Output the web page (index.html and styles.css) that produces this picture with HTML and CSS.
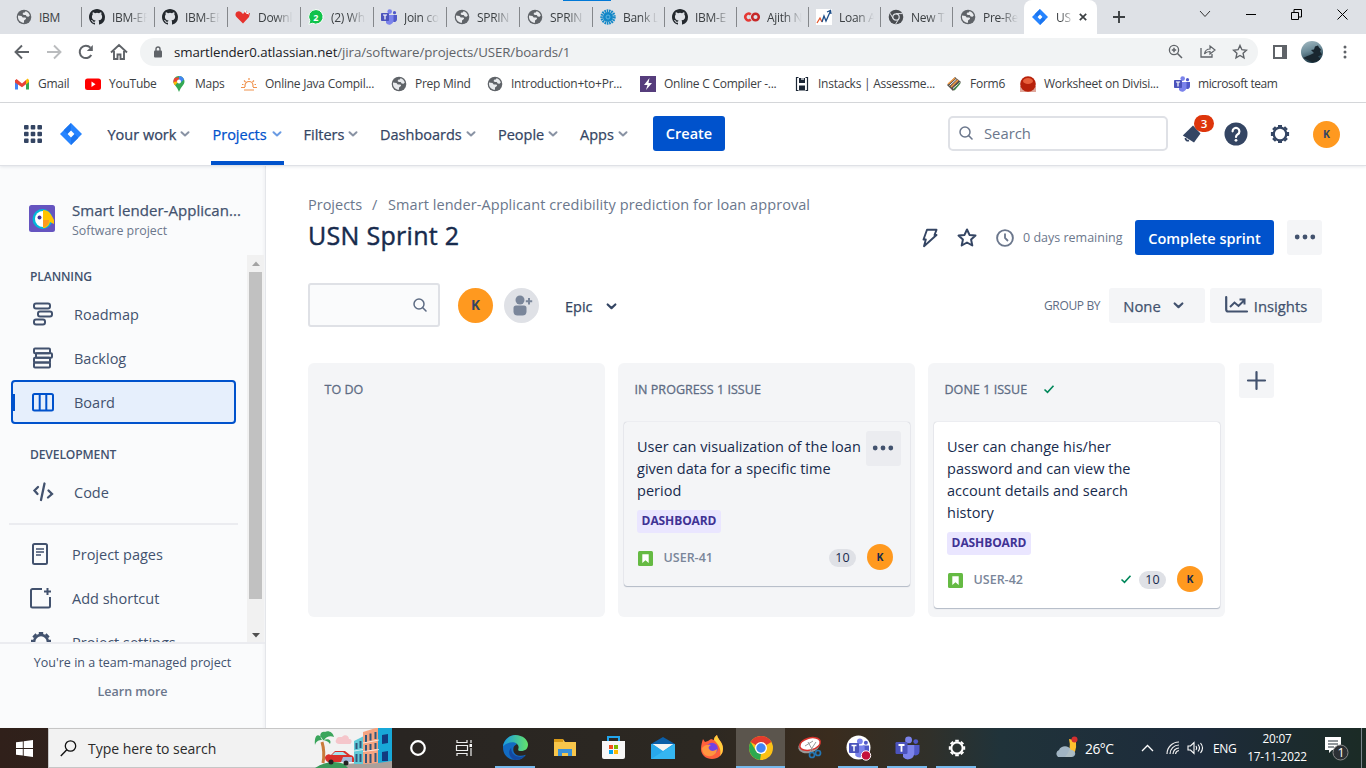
FILE: index.html
```html
<!DOCTYPE html>
<html lang="en">
<head>
<meta charset="utf-8">
<title>USN Sprint 2 - Agile board - Jira</title>
<link rel="stylesheet" href="styles.css">
</head>
<body>
<svg class="defs" width="0" height="0">
  <symbol id="globe" viewBox="0 0 16 16"><circle cx="8" cy="8" r="7.300" fill="#5f6368"/><path d="M2 6.500 5.500 7l1.200 1.500h2.600c1 .3 1 1.600 0 2L8 11.500v2.300c-3.300 0-6-2.700-6-5.800z" fill="#e8eaed"/><path d="M9.500 2.300c2 .5 3.700 2 4.300 4.200l-1.300 1.300-1.800-.3-1-1.500H7.800L6.500 5l1-1.500h1.300z" fill="#e8eaed"/></symbol>
  <symbol id="github" viewBox="0 0 16 16"><path fill="#24292e" d="M8 0C3.580 0 0 3.580 0 8c0 3.540 2.290 6.530 5.470 7.590.4.070.55-.17.55-.38 0-.19-.010-.82-.010-1.490-2.010.37-2.530-.49-2.690-.94-.090-.23-.48-.94-.82-1.130-.28-.15-.68-.52-.010-.53.63-.010 1.080.58 1.230.82.72 1.210 1.870.87 2.330.66.070-.52.28-.87.51-1.070-1.780-.2-3.640-.89-3.640-3.950 0-.87.31-1.590.82-2.150-.080-.2-.36-1.020.080-2.120 0 0 .67-.21 2.200.82a7.500 7.500 0 0 1 4 0c1.530-1.040 2.200-.82 2.200-.82.44 1.100.16 1.920.080 2.120.51.56.82 1.270.82 2.150 0 3.070-1.870 3.750-3.650 3.950.29.25.54.73.54 1.480 0 1.070-.010 1.930-.010 2.200 0 .21.15.46.55.38A8 8 0 0 0 16 8c0-4.420-3.580-8-8-8z"/></symbol>
  <symbol id="teams" viewBox="0 0 16 16"><circle cx="8.700" cy="2.600" r="2.300" fill="#7b83eb"/><circle cx="13.500" cy="3.700" r="1.600" fill="#5059c9"/><path d="M11 6h5v4.500a2.500 2.500 0 0 1-4 2z" fill="#5059c9"/><path d="M5 6h7.500v5.500a4.200 4.200 0 0 1-7.500 2.500z" fill="#7b83eb"/><rect y="4" width="8" height="8" rx=".8" fill="#4b53bc"/><path d="M2 6h4M4 6v4.500" stroke="#fff" stroke-width="1.200" fill="none"/></symbol>
  <symbol id="jira" viewBox="0 0 24 24"><path d="M12 0 24 12 12 24 0 12z" fill="#2684ff"/><path d="M12 0v8.300L8.300 12 4 7.800z" fill="#1a75f0"/><path d="M12 24v-8.300l3.700-3.700 4.300 4.200z" fill="#1a75f0"/><path d="m12 8.300 3.700 3.700-3.700 3.700L8.300 12z" fill="#fff"/></symbol>
  <symbol id="chev" viewBox="0 0 10 10"><path d="m1.500 3.200 3.500 3.300 3.500-3.300" fill="none" stroke="currentColor" stroke-width="2" stroke-linecap="round" stroke-linejoin="round"/></symbol>
  <symbol id="mag" viewBox="0 0 16 16"><circle cx="7" cy="7" r="5" fill="none" stroke="currentColor" stroke-width="1.500"/><path d="m10.800 10.800 3.200 3.200" stroke="currentColor" stroke-width="1.600" stroke-linecap="round"/></symbol>
  <symbol id="dots" viewBox="0 0 22 6"><g fill="#42526e"><circle cx="3.200" cy="3" r="2.400"/><circle cx="11" cy="3" r="2.400"/><circle cx="18.800" cy="3" r="2.400"/></g></symbol>
  <symbol id="gear" viewBox="0 0 22 22"><circle cx="11" cy="11" r="6.900" fill="none" stroke="currentColor" stroke-width="2.500"/><path d="M11 1v2.500M11 18.500V21M1 11h2.500M18.500 11H21M3.900 3.900l1.700 1.700M16.400 16.400l1.700 1.700M3.900 18.100l1.700-1.700M16.400 5.600l1.700-1.700" stroke="currentColor" stroke-width="4.400"/></symbol>
  <symbol id="story" viewBox="0 0 15 15"><rect width="15" height="15" rx="1.500" fill="#65ba43"/><path d="M4.300 3.300h6.400v8.600L7.500 9.300l-3.200 2.600z" fill="#fff"/></symbol>
  <symbol id="check" viewBox="0 0 12 10"><path d="m1.500 5.500 3 2.800 6-6.600" fill="none" stroke="#00875a" stroke-width="1.600"/></symbol>
</svg>

<div class="tabstrip">
  <div class="tab"><svg class="fav"><use href="#globe"/></svg><span>IBM</span></div>
  <div class="tab"><svg class="fav"><use href="#github"/></svg><span>IBM-EP</span></div>
  <div class="tab"><svg class="fav"><use href="#github"/></svg><span>IBM-EP</span></div>
  <div class="tab"><svg class="fav" viewBox="0 0 16 16"><path d="M8 14.500 1.500 8C-1.500 4 3 .500 6 3l2 2 3-3.500 1 3 3-.5-1 4z" fill="#e5322d"/><path d="m10 1 1 3 3 1" stroke="#fff" fill="none"/></svg><span>Downl</span></div>
  <div class="tab"><svg class="fav" viewBox="0 0 16 16"><path d="M8 .500a7.300 7.300 0 1 1-3.500 13.800L.800 15.300l1-3.600A7.300 7.300 0 0 1 8 .500z" fill="#11c24b" stroke="#fff"/><text x="5.200" y="11.500" class="wa">2</text></svg><span>(2) Wh</span></div>
  <div class="tab"><svg class="fav"><use href="#teams"/></svg><span>Join co</span></div>
  <div class="tab"><svg class="fav"><use href="#globe"/></svg><span>SPRIN</span></div>
  <div class="tab"><svg class="fav"><use href="#globe"/></svg><span>SPRIN</span></div>
  <div class="tab n"><svg class="fav" viewBox="0 0 16 16"><circle cx="8" cy="8" r="5" fill="#1287c7"/><circle cx="8" cy="8" r="6.300" fill="none" stroke="#1287c7" stroke-width="2.800" stroke-dasharray="1.600 .7"/><circle cx="8" cy="8" r="2" fill="none" stroke="#5db4e2"/></svg><span>Bank L</span></div>
  <div class="tab n"><svg class="fav"><use href="#github"/></svg><span>IBM-E</span></div>
  <div class="tab n"><svg class="fav" viewBox="0 0 16 16"><path d="M6.800 5.500A3.300 3.300 0 1 0 6.800 10.500" stroke="#e53935" stroke-width="2.500" fill="none"/><circle cx="11.500" cy="8" r="3.300" stroke="#c62828" stroke-width="2.500" fill="none"/></svg><span>Ajith N</span></div>
  <div class="tab n"><svg class="fav" viewBox="0 0 16 16"><path fill="#fff" d="M0 0h16v16H0z"/><path d="m1 14 3-5 2 4" stroke="#e4572e" fill="none" stroke-width="1.300"/><path d="m6 13 2-6 2 5 4.500-10M11 3l3.500-1.500.5 3.500" stroke="#1d4e89" fill="none" stroke-width="1.300"/></svg><span>Loan A</span></div>
  <div class="tab n"><svg class="fav" viewBox="0 0 16 16"><circle cx="8" cy="8" r="7.300" fill="#4a4d51"/><circle cx="8" cy="8" r="3.200" fill="#4a4d51" stroke="#dee1e6" stroke-width="1.200"/><path d="M8 4.600h6.500M5.200 9.700 2 4.200M10.900 9.700 7.700 15" stroke="#dee1e6"/></svg><span>New T</span></div>
  <div class="tab last"><svg class="fav"><use href="#globe"/></svg><span>Pre-Re</span></div>
  <div class="tab active"><svg class="fav"><use href="#jira"/></svg><span>US</span><svg class="close" viewBox="0 0 8 8"><path d="m.8.8 6.400 6.400M7.200.8.8 7.200" stroke="#3c4043" stroke-width="1.700"/></svg></div>
  <svg class="newtab" viewBox="0 0 12 12"><path d="M6 0v12M0 6h12" stroke="#3c4043" stroke-width="1.900"/></svg>
  <div class="winctl">
    <svg width="12" height="8"><path d="m1 1 5 5.500L11 1" fill="none" stroke="#333"/></svg>
    <svg width="11" height="8"><path d="M0 4.500h10" stroke="#000"/></svg>
    <svg width="11" height="11"><path d="M.5 3.500h7v7h-7zM3 3V.5h7.500V8H8" fill="none" stroke="#000"/></svg>
    <svg width="11" height="11"><path d="m.5.5 10 10M10.500.5l-10 10" stroke="#000"/></svg>
  </div>
  <i class="mark"></i>
</div>

<div class="toolbar">
  <div class="navbtns">
    <svg width="16" height="16" viewBox="0 0 16 16"><path d="M15 8H2M8 1.500 1.500 8 8 14.500" fill="none" stroke="#5f6368" stroke-width="1.900"/></svg>
    <svg width="16" height="16" viewBox="0 0 16 16"><path d="M1 8h13M8 1.500 14.500 8 8 14.500" fill="none" stroke="#babcbe" stroke-width="1.900"/></svg>
    <svg width="16" height="16" viewBox="0 0 16 16"><path d="M13.300 11A6.200 6.200 0 1 1 12.400 3.600" fill="none" stroke="#5f6368" stroke-width="2"/><path d="M14.800 1v6H8.800z" fill="#5f6368"/></svg>
    <svg width="18" height="16" viewBox="0 0 18 16"><path d="M1 8.500 9 1l8 7.500M4 7v8h3.500v-4.500h3V15H14V7" fill="none" stroke="#5f6368" stroke-width="1.900"/></svg>
  </div>
  <div class="url">
    <svg width="8" height="12" viewBox="0 0 8 12"><path d="M2 5V3a2 2 0 0 1 4 0v2" fill="none" stroke="#5f6368" stroke-width="1.400"/><rect y="4.500" width="8" height="7" rx="1" fill="#5f6368"/></svg>
    <p><b>smartlender0.atlassian.net</b>/jira/software/projects/USER/boards/1</p>
    <div class="urlicons">
      <svg width="15" height="15" viewBox="0 0 15 15"><circle cx="6" cy="6" r="4.600" fill="none" stroke="#5f6368" stroke-width="1.300"/><path d="M9.500 9.500 14 14M3.800 6h4.400M6 3.800v4.400" stroke="#5f6368" stroke-width="1.500"/></svg>
      <svg width="16" height="14" viewBox="0 0 16 14"><path d="M1 4v9h11v-3" fill="none" stroke="#5f6368" stroke-width="1.300"/><path d="M4.500 10c.5-3.500 2-5 5.500-5V2l5 4-5 4V7.500C7.500 7.500 6 8 4.500 10z" fill="none" stroke="#5f6368" stroke-width="1.200"/></svg>
      <svg width="16" height="15" viewBox="0 0 16 15"><path d="m8 1.500 1.900 4.200 4.500.5-3.300 3.100.9 4.500L8 11.500l-4 2.300.9-4.500L1.600 6.200l4.500-.5z" fill="none" stroke="#5f6368" stroke-width="1.400"/></svg>
    </div>
  </div>
  <svg class="panel" viewBox="0 0 14 14"><path d="M1 1h12v12H1z" fill="none" stroke="#5f6368" stroke-width="2"/><path d="M9 1h4v12H9z" fill="#5f6368"/></svg>
  <svg class="profile" viewBox="0 0 22 22"><defs><clipPath id="pc"><circle cx="11" cy="11" r="11"/></clipPath><linearGradient id="pg" x2=".3" y2="1"><stop stop-color="#a5bcc4"/><stop offset=".5" stop-color="#6d8c99"/><stop offset="1" stop-color="#1c3746"/></linearGradient></defs><g clip-path="url(#pc)"><path d="M0 0h22v22H0z" fill="url(#pg)"/><path d="M2 17q4-2 7-3l4-2-3-3 3-.500 1-3 3-1 1 2 2 2-1 2 2 3-4 2 3 3-8 3z" fill="#19262f"/></g></svg>
  <svg class="kebab" viewBox="0 0 4 14"><g fill="#5f6368"><circle cx="2" cy="2" r="1.500"/><circle cx="2" cy="7" r="1.500"/><circle cx="2" cy="12" r="1.500"/></g></svg>
</div>

<div class="bookmarks">
  <a class="w1"><svg viewBox="0 0 16 16"><path d="M1 13.500V4h3v9.500z" fill="#4285f4"/><path d="M12 13.500V4h3v9.500z" fill="#34a853"/><path d="M1 4.500 2.500 3 8 7.500 12 4v4.200l-4 3L1 6.500z" fill="#ea4335"/><path d="m12 4 1.500-1.500L15 4v2l-3 2.500z" fill="#fbbc04"/></svg>Gmail</a>
  <a class="w2"><svg viewBox="0 0 16 16"><rect y="2.500" width="16" height="11.500" rx="2.500" fill="red"/><path d="m6.500 5.500 4 2.700-4 2.700z" fill="#fff"/></svg>YouTube</a>
  <a class="w3"><svg viewBox="0 0 16 16"><path d="M8 0a5.500 5.500 0 0 0-4 9.200c2 2.300 3 4.300 4 6.800 1-2.500 2-4.500 4-6.800A5.500 5.500 0 0 0 8 0z" fill="#34a853"/><path d="M3.800 1.800A5.500 5.500 0 0 0 4 9l5-7.800z" fill="#ea4335"/><path d="M2.500 6a5.500 5.500 0 0 0 1.500 3.200L8 5z" fill="#fbbc04"/><path d="M8 0a5.500 5.500 0 0 1 5 3.500L8 8z" fill="#4285f4"/><circle cx="8" cy="5.500" r="2" fill="#fff"/></svg>Maps</a>
  <a class="w4"><svg viewBox="0 0 16 16"><path d="M4 11V9.500a4 4 0 0 1 8 0V11M0 11.500h4M12 11.500h4M3 14h10M8 2v2M3 4.500l1.500 1.500M13 4.500 11.500 6M1 8.500h1.500M13.500 8.500H15" fill="none" stroke="#f0924c" stroke-width="1.200"/></svg>Online Java Compil...</a>
  <a class="w5"><svg><use href="#globe"/></svg>Prep Mind</a>
  <a class="w6"><svg><use href="#globe"/></svg>Introduction+to+Pr...</a>
  <a class="w7"><svg viewBox="0 0 16 16"><path fill="#563d7c" d="M0 0h16v16H0z"/><path d="M9.500 2 4 9h3.500L6 14l6-7H8.500z" fill="#fff"/></svg>Online C Compiler -...</a>
  <a class="w8"><svg viewBox="0 0 16 16"><path d="M4.500 1.500H2.500v13h2M11.500 1.500h2v13h-2" stroke="#1b2635" fill="none" stroke-width="1.200"/><path d="M5 2h6v5H5zM5 9.500h6v5H5z" fill="#1b2635"/><path d="M7 2h3v2H7z" fill="#fff" opacity=".6"/></svg>Instacks | Assessme...</a>
  <a class="w9"><svg viewBox="0 0 16 16"><path d="m1 9 8-8 6 5-8 9z" fill="#56514b"/><path d="m2 8 7-6M5 11l7-7" stroke="#f49b42" stroke-width="1.500"/><path d="m3.500 9.500 7-6.500M7 12.500l7-6" stroke="#fff" stroke-width="1"/><path d="m8 14 6-7" stroke="#438b48" stroke-width="1.500"/></svg>Form6</a>
  <a class="w10"><svg viewBox="0 0 16 16"><path d="M0 10h16v6H0z" fill="#dfa79b"/><circle cx="8" cy="8" r="7.800" fill="#b7210a"/><ellipse cx="8" cy="5" rx="5" ry="3" fill="#e8603c"/></svg>Worksheet on Divisi...</a>
  <a class="w11"><svg><use href="#teams"/></svg>microsoft team</a>
</div>

<header class="nav">
  <svg class="apps" viewBox="0 0 18 18"><g fill="#344563"><rect width="4.600" height="4.600" rx="1"/><rect x="6.700" width="4.600" height="4.600" rx="1"/><rect x="13.400" width="4.600" height="4.600" rx="1"/><rect y="6.700" width="4.600" height="4.600" rx="1"/><rect x="6.700" y="6.700" width="4.600" height="4.600" rx="1"/><rect x="13.400" y="6.700" width="4.600" height="4.600" rx="1"/><rect y="13.400" width="4.600" height="4.600" rx="1"/><rect x="6.700" y="13.400" width="4.600" height="4.600" rx="1"/><rect x="13.400" y="13.400" width="4.600" height="4.600" rx="1"/></g></svg>
  <svg class="logo"><use href="#jira"/></svg>
  <nav class="menu">
    <a>Your work<svg><use href="#chev"/></svg></a>
    <a class="on">Projects<svg><use href="#chev"/></svg></a>
    <a>Filters<svg><use href="#chev"/></svg></a>
    <a>Dashboards<svg><use href="#chev"/></svg></a>
    <a>People<svg><use href="#chev"/></svg></a>
    <a>Apps<svg><use href="#chev"/></svg></a>
  </nav>
  <button class="primary create">Create</button>
  <div class="search"><svg width="16" height="16"><use href="#mag"/></svg>Search</div>
  <div class="bell"><svg width="20" height="20" viewBox="0 0 20 20"><path d="M.8 11.500 11 1.500l7.500 8L12 18.500z" fill="#344563"/><path d="M3.500 14c0 2 1.500 3 3.500 2.300" stroke="#344563" stroke-width="1.800" fill="none"/></svg><em>3</em></div>
  <svg class="help" viewBox="0 0 24 24"><circle cx="12" cy="12" r="11.500" fill="#344563"/><path d="M8.600 9.300a3.400 3.400 0 1 1 5.200 2.900c-1.200.8-1.800 1.200-1.800 2.800" fill="none" stroke="#fff" stroke-width="2.200" stroke-linecap="round"/><circle cx="12" cy="18.300" r="1.400" fill="#fff"/></svg>
  <svg class="cog"><use href="#gear"/></svg>
  <span class="avatar md">K</span>
</header>

<div class="page">
  <aside>
    <div class="project">
      <svg width="26" height="27" viewBox="0 0 26 27"><rect width="26" height="27" rx="2.500" fill="#6554c0"/><circle cx="13.500" cy="14" r="10" fill="#00b8d9"/><path d="M14 6a8 8 0 0 0 0 16z" fill="#fff"/><path d="M14 5c6 0 8 4 11 10v4l-4-2c-1 4-4 6-7 6z" fill="#ffc400"/><path d="M14 15h6c0 4-2 7-6 7z" fill="#ff991f"/><circle cx="10.500" cy="12.500" r="2" fill="#403294"/></svg>
      <div><h2>Smart lender-Applican...</h2><p>Software project</p></div>
    </div>
    <div class="scroller">
      <div class="items">
        <h3>PLANNING</h3>
        <a><svg viewBox="0 0 22 24"><g fill="none" stroke="#42526e" stroke-width="2"><rect x="2" y="1.500" width="16" height="5" rx="2"/><rect x="6" y="9.500" width="14" height="5" rx="2"/><rect x="2" y="17.500" width="11" height="5" rx="2"/></g></svg>Roadmap</a>
        <a><svg viewBox="0 0 22 24"><g fill="none" stroke="#42526e" stroke-width="2"><rect x="2" y="2.500" width="16" height="4.700" rx="1"/><rect x="4" y="7.200" width="16" height="4.600" rx="1"/><rect x="2" y="11.800" width="16" height="4.700" rx="1"/><rect x="2" y="16.500" width="16" height="5" rx="1"/></g></svg>Backlog</a>
        <a class="sel"><svg viewBox="0 0 22 24"><g fill="none" stroke="#0052cc" stroke-width="2"><rect x="1" y="4" width="20" height="16.500" rx="1.500"/><path d="M7.700 4v16.500M14.300 4v16.500"/></g></svg>Board</a>
        <h3 class="dev">DEVELOPMENT</h3>
        <a class="code"><svg viewBox="0 0 22 24"><path d="M6 7 2.500 10.500 5.500 14M16.500 10.500l3.500 3.500-4 3.500M12.500 3.500 9 20" fill="none" stroke="#42526e" stroke-width="2.300" stroke-linecap="round"/></svg>Code</a>
        <hr>
        <a class="low"><svg viewBox="0 0 22 24"><rect x="3" y="2" width="14" height="20" rx="1.500" fill="none" stroke="#42526e" stroke-width="2"/><path d="M6 7h8M6 10h8M6 13h5" stroke="#42526e" stroke-width="1.700"/></svg>Project pages</a>
        <a class="low"><svg viewBox="0 0 22 24"><path d="M12 3H2.500A1.500 1.500 0 0 0 1 4.500v15.500A1.500 1.500 0 0 0 2.500 21.500h16a1.500 1.500 0 0 0 1.500-1.500V11" fill="none" stroke="#42526e" stroke-width="2"/><path d="M17.500 2v7M14 5.500h7" stroke="#42526e" stroke-width="2"/></svg>Add shortcut</a>
        <a class="low"><svg class="g"><use href="#gear"/></svg>Project settings</a>
      </div>
      <div class="bar"><svg width="8" height="5"><path d="M0 5 4 .5 8 5z" fill="#a3a3a3"/></svg><i></i><svg width="8" height="5"><path d="M0 0 4 4.500 8 0z" fill="#505050"/></svg></div>
    </div>
    <div class="foot"><p>You're in a team-managed project</p><b>Learn more</b></div>
  </aside>

  <main>
    <div class="crumbs"><span class="c1">Projects</span><span class="c2">/</span><span class="c3">Smart lender-Applicant credibility prediction for loan approval</span></div>
    <div class="titlerow">
      <h1>USN Sprint 2</h1>
      <svg class="bolt" viewBox="0 0 16 20"><path d="M5 1.800h9.500L12.500 7h2L2 18.200 3.800 11.500H1.500z" fill="none" stroke="#344563" stroke-width="1.900" stroke-linejoin="round"/></svg>
      <svg class="star" viewBox="0 0 20 19"><path d="m10 1.500 2.500 5.400 6 .7-4.400 4 1.200 5.900-5.300-3-5.300 3 1.200-5.900-4.400-4 6-.7z" fill="none" stroke="#344563" stroke-width="2" stroke-linejoin="round"/></svg>
      <svg class="clock" viewBox="0 0 18 18"><circle cx="9" cy="9" r="7.900" fill="none" stroke="#6b778c" stroke-width="1.900"/><path d="M9 4.500V9l3 3" fill="none" stroke="#6b778c" stroke-width="1.800"/></svg>
      <span class="remain">0 days remaining</span>
      <button class="primary complete">Complete sprint</button>
      <button class="grey more"><svg width="22" height="6"><use href="#dots"/></svg></button>
    </div>
    <div class="filters">
      <div class="find"><svg width="16" height="16"><use href="#mag"/></svg></div>
      <span class="avatar lg">K</span>
      <svg class="adduser" viewBox="0 0 35 35"><circle cx="17.500" cy="17.500" r="17.500" fill="#dfe1e6"/><g fill="#7a869a"><circle cx="16" cy="12" r="4.500"/><path d="M9.500 20a2.500 2.500 0 0 1 2.500-2.500h8a2.500 2.500 0 0 1 2.500 2.500v4a4 4 0 0 1-4 3.500h-5a4 4 0 0 1-4-3.500z"/></g><path d="M25 10v6.500M21.800 13.200h6.400" stroke="#7a869a" stroke-width="2"/></svg>
      <span class="epic">Epic<svg><use href="#chev"/></svg></span>
      <span class="group">GROUP BY</span>
      <button class="grey none">None<svg><use href="#chev"/></svg></button>
      <button class="grey insights"><svg viewBox="0 0 23 17"><path d="M1.200 1v12.500a2 2 0 0 0 2 2H22" fill="none" stroke="#42526e" stroke-width="2.200" stroke-linecap="round"/><path d="m5 11 4.500-4.500 4 3.500L19 4.500M14.500 3.500h5v5" fill="none" stroke="#42526e" stroke-width="2"/></svg>Insights</button>
    </div>
    <div class="board">
      <section><h4>TO DO</h4></section>
      <section><h4>IN PROGRESS 1 ISSUE</h4>
        <article class="hover">
          <p>User can visualization of the loan<br>given data for a specific time<br>period</p>
          <span class="tag">DASHBOARD</span>
          <div class="meta"><svg class="st"><use href="#story"/></svg><b>USER-41</b><span class="pts">10</span><span class="avatar sm">K</span></div>
          <button class="cardmore"><svg width="22" height="6"><use href="#dots"/></svg></button>
        </article>
      </section>
      <section><h4>DONE 1 ISSUE<svg class="ck"><use href="#check"/></svg></h4>
        <article>
          <p>User can change his/her<br>password and can view the<br>account details and search<br>history</p>
          <span class="tag">DASHBOARD</span>
          <div class="meta"><svg class="st"><use href="#story"/></svg><b>USER-42</b><svg class="ck2"><use href="#check"/></svg><span class="pts">10</span><span class="avatar sm">K</span></div>
        </article>
      </section>
      <button class="grey add"><svg width="19" height="19" viewBox="0 0 19 19"><path d="M9.500 1v17M1 9.500h17" stroke="#42526e" stroke-width="2.200" stroke-linecap="round"/></svg></button>
    </div>
  </main>
</div>

<footer class="taskbar">
  <div class="start"><svg width="17" height="17" viewBox="0 0 17 17"><path d="m0 2.300 6.800-.9v6.700H0zM7.700 1.200 17 0v8.100H7.700zM0 9h6.800v6.600L0 14.700zM7.700 9H17v8l-9.300-1.200z" fill="#fff"/></svg></div>
  <div class="wsearch">
    <svg width="17" height="17" viewBox="0 0 17 17"><circle cx="10.500" cy="6" r="5.200" fill="none" stroke="#111" stroke-width="1.300"/><path d="M6.800 9.800.8 16" stroke="#111" stroke-width="1.400"/></svg>
    <span>Type here to search</span>
    <svg class="art" viewBox="0 0 78 40"><path d="M1 40q16-10 32-3l3 3z" fill="#3a9a5a"/><path d="m30 36 48-3v7H34z" fill="#a9a09b"/><path d="M8 14q3 10 1 21" stroke="#c97b3c" stroke-width="3" fill="none"/><path d="M9 12C3 2 0 10 1 17c1-4 4-5 7-5-4-6 0-9 3-8 3-2 8 0 9 5-4-2-8 0-10 3 4-2 8 0 6 4-2-3-5-4-8-4z" fill="#3aa55b"/><path d="M22 12c1-4 4-3 6-3 2-3 7-2 7 2 3-1 4 5 0 5H25c-3 0-4-3-3-4z" fill="#f5c6cb"/><path d="m40 13 10-5v28H40z" fill="#62cbd8"/><path d="m49 4 16-5v36l-16 1z" fill="#f5a481"/><path d="m64 0 14-3v36l-14 2z" fill="#18a8d8"/><path d="M42.500 15v6M46.500 13v7M52 7v7M56.500 5.500v7M61.500 4v7M52 17v6M56.500 16v6M61.500 15v6M42.500 26v8M46.500 26v8M52 26v9M56.500 26v9M61.500 25v9" stroke="#31577c" stroke-width="2"/><path d="m49 23.500 16-2M49 15l16-3M40 23l9-1.500" stroke="#fff" stroke-width="1" opacity=".7"/><path d="m68 7 6-1v9l-6 1zM68 24l6-1v10h-6z" fill="#123b80"/><path d="M11 29q2-4 6-2l4-4h10l5 4q5 0 4 7H14q-3-1-3-5z" fill="#d9302b"/><path d="m18 27 3-3h8l4 3z" fill="#a7e3ee"/><path d="M29 29h9v5H27z" fill="#a5b8d9"/><circle cx="17" cy="34" r="2.500" fill="#222"/><circle cx="32" cy="35" r="2.500" fill="#222"/></svg>
  </div>
  <div class="cell"><svg width="16" height="16"><circle cx="8" cy="8" r="6.800" fill="none" stroke="#fff" stroke-width="2.200"/></svg></div>
  <div class="cell tv"><svg width="17" height="16"><path d="M1 0v2.500h10V0M1 16v-2.500h10V16M.5 5.500h11v5H.5zM15 0v3M15 8v8" fill="none" stroke="#eee" stroke-width="1.200"/><path d="M13.500 4H16v3h-2.500z" fill="#fff"/></svg></div>
  <div class="cell run"><svg width="25" height="25" viewBox="0 0 24 24"><defs><linearGradient id="e1" x2="1"><stop stop-color="#199ae0"/><stop offset="1" stop-color="#64e36b"/></linearGradient></defs><path d="M12 0C5 0 0 6 0 12c0 7 5 12 12 12 4 0 7-1 10-5-7 3-13-1-12-6 0-2 1-3 3-4z" fill="#126bc2"/><path d="M0 11C1 4 7 0 12 0c7 0 12 5 12 9 0 5-4 7-9 6-1-1 0-2 0-3 0-3-3-5-6-5-4 0-7 2-9 4z" fill="url(#e1)"/><path d="M8 12c-1 7 6 11 13 8-3 4-8 4-10 4-5-2-7-8-3-12z" fill="#1448a0"/></svg></div>
  <div class="cell"><svg width="22" height="19"><path d="M0 1h9l2 3h11v14H0z" fill="#f7c64b"/><path d="M0 1h9v3H0z" fill="#d99a17"/><path d="M4 18v-7h14v7h-4v-3H8v3z" fill="#3a91d8"/></svg></div>
  <div class="cell"><svg width="23" height="24"><path d="M6 6V1h11v5" stroke="#22a6ed" stroke-width="2" fill="none"/><path d="M0 5h23v16q0 2-2 2H2q-2 0-2-2z" fill="#f7f7f7"/><path d="M7 9h4v4H7z" fill="#f25022"/><path d="M12 9h4v4h-4z" fill="#7fba00"/><path d="M7 14h4v4H7z" fill="#00a4ef"/><path d="M12 14h4v4h-4z" fill="#ffb900"/></svg></div>
  <div class="cell"><svg width="24" height="22"><path d="M0 7 12 0l12 7v3H0z" fill="#0a5ea8"/><path d="M0 7h24v15H0z" fill="#28a8ea"/><path d="M2 7h20l-10 7z" fill="#f4f4f4"/><path d="M24 7 0 22h24z" fill="#35b6f1"/><path d="M2 7h20l-10 6.500z" fill="#f4f4f4"/></svg></div>
  <div class="cell"><svg width="24" height="25" viewBox="0 0 24 25"><path d="M3 4 5 7l3-1 3-2 3 1c0-3 2-4 3-5 1 5 6 7 6 14 0 6-5 10-11 10S1 20 1 14c0-4 1-7 2-10z" fill="#ff5f3c"/><path d="M14 5c0-3 2-4 3-5 1 5 6 7 6 14q0 4-3 7c2-7-2-12-6-16z" fill="#ffcf3d"/><circle cx="12" cy="13.500" r="5.800" fill="#7542e5"/><path d="M2 13c2-3 6-4 9-3-2 1-3 2-2 4 2 3 6 2 8 0 0 5-5 8-9 7-4 0-6-4-6-8z" fill="#ff9640"/></svg></div>
  <div class="cell cur"><svg width="24" height="24" viewBox="0 0 24 24"><circle cx="12" cy="12" r="12" fill="#fbc116"/><path d="M12 12 1.600 6A12 12 0 0 1 22.400 6z" fill="#e33b2e"/><path d="M1.600 6 7 15l5 3-1 5.900A12 12 0 0 1 1.600 6z" fill="#2da94f"/><circle cx="12" cy="12" r="6" fill="#fff"/><circle cx="12" cy="12" r="4.700" fill="#4285f4"/></svg></div>
  <div class="cell"><svg width="24" height="24"><ellipse cx="11" cy="10" rx="11" ry="7" fill="#999" transform="rotate(-15 11 10)"/><ellipse cx="12" cy="8" rx="10.500" ry="6" fill="#fff" stroke="#d8322c" stroke-width="1.500" transform="rotate(-15 12 8)"/><path d="m7 10 8-5M10 6l5 9M18 6l-6 9" stroke="#999"/><circle cx="14" cy="19" r="2.500" fill="none" stroke="#2577b5" stroke-width="1.700"/><circle cx="20" cy="17" r="2.500" fill="none" stroke="#2577b5" stroke-width="1.700"/></svg></div>
  <div class="cell run"><svg width="25" height="26" viewBox="0 0 25 26"><circle cx="12.500" cy="12.500" r="12" fill="#fff"/><svg x="3" y="3" width="20" height="20"><use href="#teams"/></svg><circle cx="20" cy="20.500" r="4.700" fill="#c4123c" stroke="#fff"/></svg></div>
  <div class="cell run"><svg width="25" height="24"><use href="#teams"/></svg></div>
  <div class="cell run white"><svg width="18" height="18"><use href="#gear"/></svg></div>
  <div class="tray">
    <svg class="moon" width="24" height="24"><path d="M14 3q4 0 7 3 1 10-5 15h-6q7-7 4-18z" fill="#ffbf2e"/><circle cx="19.500" cy="3.500" r="3" fill="#d32f2f"/><path d="M3 21a4 4 0 0 1 1-7c2-5 10-5 12 0 5 0 6 6 1 7z" fill="#a9bdcb" opacity=".95"/></svg>
    <span class="temp">26°C</span>
    <svg class="up" width="13" height="8"><path d="m1 7 5.500-5.500L12 7" fill="none" stroke="#fff" stroke-width="1.300"/></svg>
    <svg class="wifi" width="14" height="14"><g fill="none" stroke="#eee" stroke-width="1.200"><path d="M1 13A12 12 0 0 1 13 1M4 13a9 9 0 0 1 9-9M7 13a6 6 0 0 1 6-6M9.500 13a4 4 0 0 1 3.500-3.500"/></g></svg>
    <svg class="vol" width="17" height="14"><path d="M1 5h2.500L7 1.500v11L3.500 9H1zM9 5q1.500 2 0 4M11 3.500q3 3.500 0 7M13.500 2q4 5 0 10" fill="none" stroke="#fff" stroke-width="1.100"/></svg>
    <span class="eng">ENG</span>
    <div class="time">20:07<br>17-11-2022</div>
    <svg class="note" width="25" height="25" viewBox="0 0 25 25"><path d="M1 1h16v13h-9l-3 3v-3H1z" fill="#fff"/><path d="M4 5h10M4 8h10M4 11h6" stroke="#25313a" stroke-width="1.200"/><circle cx="16.500" cy="16.500" r="7.500" fill="#2c3034" stroke="#888"/><text x="13.500" y="21">1</text></svg>
    <i></i>
  </div>
</footer>
</body>
</html>
```
FILE: styles.css
```css
* { box-sizing: border-box; }
body { margin: 0; width: 1366px; height: 768px; overflow: hidden; background: #fff; font-family: "Open Sans", "Noto Sans", sans-serif; font-size: 14.5px; color: #172b4d; }
h1, h2, h3, h4, p { margin: 0; }
svg { flex: none; display: block; overflow: visible; }
.defs { position: absolute; }
button { border: 0; font: inherit; padding: 0; }
a, span, b, h1, h2, p, button { white-space: nowrap; }

.tabstrip { position: relative; height: 34px; background: #dee1e6; display: flex; align-items: center; padding-left: 9px; font-size: 12px; color: #3c4043; }
.mark { position: absolute; top: 0; left: 563px; width: 48px; height: 1px; background: #0078d7; }
.tab { width: 73px; height: 20px; flex: none; display: flex; align-items: center; gap: 7px; padding-left: 7px; border-right: 1px solid #84878b; }
.tab.n { width: 72px; }
.tab span { width: 38px; letter-spacing: -.3px; margin-right: -6px; mask-image: linear-gradient(90deg, #000 45%, transparent 92%); }
.tab:first-child span { mask-image: none; }
.fav { width: 16px; height: 16px; }
.fav .wa { font: bold 9px "Open Sans"; fill: #fff; }
.tab.last { border-color: transparent; width: 71px; }
.tab.active { width: 73px; height: 34px; background: #fff; border: 0; border-radius: 8px 8px 0 0; padding-left: 8px; gap: 8px; }
.tab.active span { width: 15px; margin: 0; mask-image: linear-gradient(90deg, #000 30%, #0004); }
.close { width: 8px; height: 8px; }
.newtab { width: 12px; height: 12px; margin-left: 16px; }
.winctl { display: flex; align-items: center; justify-content: space-between; width: 149px; margin: -6px 0 0 74px; }

.toolbar { height: 35px; display: flex; align-items: center; }
.navbtns { display: flex; gap: 16px; width: 140px; padding-left: 14px; }
.url { width: 1118px; height: 28px; border-radius: 14px; background: #f1f3f4; display: flex; align-items: center; padding-left: 14px; font-size: 13.300px; color: #5f6368; }
.url p { margin-left: 12px; letter-spacing: -.09px; }
.url b { font-weight: 400; color: #202124; }
.urlicons { margin-left: auto; display: flex; gap: 16.500px; margin-right: 10px; }
.urlicons svg:first-child { margin-left: 0; }
.panel { width: 14px; height: 14px; margin-left: 15px; }
.profile { width: 22px; height: 22px; margin-left: 14px; }
.kebab { width: 4px; height: 14px; margin-left: 20px; }
.bookmarks { height: 34px; padding: 0 0 4px 14px; border-bottom: 1px solid #d5d7da; display: flex; align-items: center; font-size: 12px; letter-spacing: -.25px; color: #3c4043; }
.bookmarks a { display: flex; align-items: center; gap: 8px; flex: none; }
.bookmarks svg { width: 16px; height: 16px; }
.w1 { width: 71px; } .w2 { width: 86px; } .w3 { width: 70px; } .w4 { width: 150px; } .w5 { width: 96px; } .w6 { width: 153px; } .w7 { width: 154px; } .w8 { width: 152px; } .w9 { width: 74px; } .w10 { width: 154px; } .w11 { letter-spacing: -.4px; }

.nav { height: 62px; display: flex; align-items: center; position: relative; z-index: 1; padding-left: 24px; background: #fff; color: #344563; box-shadow: 0 1px 0 #dfe1e6, 0 2px 3px #091e4218; }
.apps { width: 18px; height: 18px; }
.logo { width: 22px; height: 22px; margin-left: 17.500px; }
.menu { display: grid; grid-template-columns: 105px 91px 76.500px 118px 82px 72px; margin-left: 24px; height: 62px; -webkit-text-stroke: .25px; }
.menu a { display: flex; align-items: center; gap: 4px; padding-left: 2px; font-weight: 500; }
.menu svg { width: 10px; height: 10px; color: #8993a4; }
.menu .on { width: 73px; color: #0052cc; border-bottom: 4px solid #0052cc; padding-top: 4px; gap: 5px; }
.menu .on svg { color: #6a9be3; }
.primary { background: #0052cc; color: #fff; border-radius: 3px; height: 35px; font-weight: 600; }
.create { width: 72px; margin: -2px 0 0 3px; }
.search { width: 220px; height: 35px; margin: -2px 0 0 223px; border: 2px solid #dfe1e6; border-radius: 5px; display: flex; align-items: center; gap: 10px; padding-left: 8px; color: #6b778c; font-size: 14.800px; }
.bell { position: relative; width: 20px; height: 20px; margin-left: 14px; }
.bell em { position: absolute; left: 12px; top: -9px; width: 20px; height: 17px; border-radius: 9px; background: #de350b; color: #fff; font: 600 11.500px/17px "Open Sans"; text-align: center; }
.help { width: 24px; height: 24px; margin-left: 22px; }
.cog { width: 20px; height: 20px; margin-left: 22px; color: #344563; }
.avatar { background: #ff991f; border-radius: 50%; display: grid; place-items: center; font-weight: 700; flex: none; }
.md { width: 27px; height: 27px; margin-left: 23px; font-size: 10.500px; }
.lg { width: 35px; height: 35px; margin-left: 18px; font-size: 13.500px; }
.sm { width: 26px; height: 26px; font-size: 10.500px; }

.page { display: grid; grid-template-columns: 266px 1fr; height: 563px; }
aside { background: #fafbfc; border-right: 1px solid #e4e6ea; box-shadow: inset -2px 0 2px #091e4208; color: #42526e; padding-top: 35px; display: flex; flex-direction: column; }
.project { height: 55px; display: flex; padding: 5px 0 0 29px; gap: 17px; }
.project h2 { font-size: 15px; font-weight: 500; line-height: 20px; margin-top: -5px; -webkit-text-stroke: .25px; letter-spacing: .05px; }
.project p { font-size: 12.400px; color: #6b778c; line-height: 22px; }
.scroller { height: 389px; overflow: hidden; display: flex; border-bottom: 2px solid #ebecf0; flex: none; }
.items { width: 247px; }
h3 { font-size: 12.100px; font-weight: 600; line-height: 20px; padding-left: 30px; margin: 12px 0 5px; letter-spacing: -.12px; }
h3.dev { margin: 21px 0 5px; }
.items a { display: flex; align-items: center; height: 44px; padding-left: 32px; gap: 20px; }
.items a svg { width: 22px; height: 24px; }
.items .sel { position: relative; width: 225px; margin-left: 11px; padding-left: 19px; border: 2px solid #0052cc; border-radius: 4px; background: #e6effc; }
.sel::before { content: ""; position: absolute; left: 0; top: 12px; width: 2px; height: 17px; background: #0052cc; }
hr { border: 0; height: 2px; background: #ebecf0; width: 229px; margin: 9px 0 7px 9px; }
.items .low { padding-left: 30px; }
.bar { width: 17px; background: #f1f1f1; display: flex; flex-direction: column; align-items: center; padding: 6px 0; }
.bar i { width: 13px; height: 327px; flex: none; background: #c1c1c1; margin: 6px 0 34px; }
.foot { text-align: center; font-size: 12.500px; padding-top: 9px; line-height: 20px; }
.foot b { display: block; margin-top: 9px; font-weight: 600; color: #6b778c; }

main { padding: 29px 0 0 42px; }
.crumbs { display: flex; height: 22px; line-height: 22px; color: #6b778c; }
.c1 { width: 64px; } .c2 { width: 16px; } .c3 { letter-spacing: .07px; }
.titlerow { height: 35px; margin-top: 4px; display: flex; align-items: center; }
h1 { width: 614px; font-size: 25px; font-weight: 500; margin-top: -5px; -webkit-text-stroke: .45px; letter-spacing: .3px; }
.bolt { width: 16px; height: 20px; }
.star { width: 20px; height: 19px; margin-left: 19px; }
.clock { width: 18px; height: 18px; margin-left: 19px; }
.remain { width: 112px; margin-left: 9px; font-size: 12.500px; color: #6b778c; }
.complete { width: 139px; padding-top: 1px; }
.grey { background: #f4f5f7; border-radius: 3px; height: 35px; display: flex; align-items: center; justify-content: center; color: #42526e; font-weight: 500; }
.more { width: 35px; margin-left: 13px; padding-bottom: 1px; }
.filters { height: 44px; margin-top: 28px; display: flex; align-items: center; color: #344563; }
.find { width: 132px; height: 44px; border: 2px solid #dfe1e6; border-radius: 3px; background: #fafbfc; display: flex; align-items: center; justify-content: flex-end; padding-right: 10px; color: #5e6c84; }
.adduser { width: 35px; height: 35px; margin-left: 11px; }
.epic { width: 52px; margin: 2px 0 0 26px; display: flex; align-items: center; justify-content: space-between; font-weight: 500; -webkit-text-stroke: .25px; }
.epic svg, .none svg { width: 11px; height: 11px; }
.group { width: 65px; margin-left: 427px; font-size: 12px; color: #5e6c84; letter-spacing: -.35px; }
.none, .insights { -webkit-text-stroke: .25px; padding-top: 1px; }
.none { width: 96px; gap: 12px; padding-right: 7px; font-size: 14.800px; }
.insights { width: 112px; margin-left: 5px; gap: 6px; font-size: 14.800px; }
.insights svg { width: 23px; height: 17px; margin-top: -3px; }
.board { margin-top: 36px; display: flex; gap: 13px; }
section { width: 297px; height: 254px; background: #f4f5f7; border-radius: 6px; padding: 0 5.500px; }
h4 { height: 58.500px; padding: 0 0 6px 11px; display: flex; align-items: center; font-size: 12.500px; letter-spacing: .05px; font-weight: 500; color: #5e6c84; -webkit-text-stroke: .3px; }
.ck { width: 12px; height: 10px; margin-left: 16px; }
article { position: relative; background: #fff; border-radius: 3px; padding: 14.500px 13.500px 8px; box-shadow: 0 1px 1px #091e4240, 0 0 1px #091e4250; height: 186.500px; }
article.hover { background: #f4f5f7; height: 164.500px; }
article p { line-height: 22px; letter-spacing: .03px; }
.tag { display: block; width: 84px; height: 23px; margin-top: 8px; background: #eae6ff; color: #403294; border-radius: 3px; font: 700 12px/22px "Open Sans"; text-align: center; letter-spacing: -.1px; }
.meta { display: flex; align-items: center; height: 26px; margin: 11px 3px 0 1px; }
.st { width: 15px; height: 15px; margin-top: 2px; }
.meta b { margin: 0 auto 0 10.500px; font-size: 12.500px; font-weight: 600; color: #7a869a; }
.ck2 { width: 12px; height: 10px; margin-right: 7px; }
.pts { width: 27px; height: 18px; margin: 2px 11px 0 0; border-radius: 9px; background: #dfe1e6; font-size: 12.500px; line-height: 18px; text-align: center; }
.cardmore { position: absolute; right: 9px; top: 9.500px; width: 35px; height: 35px; padding-bottom: 1px; border-radius: 3px; background: #ebecf0; display: grid; place-items: center; }
.add { width: 35px; margin-left: 1px; padding: 0 1px 1px 0; }

.taskbar { height: 40px; display: flex; background: linear-gradient(90deg, #30201a 0, #292522 400px, #2c2822 700px, #3a2c1e 830px, #30302a 930px, #20333a 1000px, #1d2b3b 1200px, #1b2b25); color: #fff; }
.start { width: 48px; display: grid; place-items: center; }
.wsearch { width: 344px; margin-right: 1px; background: #f2f2f2; border: 1px solid #c6c6c6; border-right: 0; display: flex; align-items: center; padding-left: 11px; color: #2b2b2b; font-size: 14px; }
.wsearch span { width: 226px; margin-left: 11px; letter-spacing: -.03px; }
.art { width: 78px; height: 40px; overflow: hidden; }
.cell { width: 49px; display: grid; place-items: center; border-bottom: 2px solid transparent; padding-top: 1px; flex: none; }
.tv { padding-right: 4px; }
.run { background: linear-gradient(#76b9ed, #76b9ed) 4px 100%/40px 2px no-repeat; background-origin: border-box; background-clip: border-box; }
.cur { background: #5b554d; border-color: #76b9ed; }
.white { color: #fff; }
.tray { display: flex; align-items: center; width: 385px; font-size: 12.300px; }
.moon { margin-left: 74px; }
.temp { width: 56px; margin-left: 6px; font-size: 13.800px; letter-spacing: -.5px; }
.wifi { margin-left: 12px; }
.vol { margin-left: 7px; }
.eng { width: 24px; margin-left: 9px; font-size: 12px; letter-spacing: -.4px; }
.time { width: 76px; margin-left: 2px; text-align: center; line-height: 18px; font-size: 11.800px; letter-spacing: -.2px; padding-bottom: 2px; }
.note { margin-left: 9px; }
.note text { font: 12.500px "Open Sans"; fill: #fff; }
.tray i { width: 1px; height: 40px; margin-left: 12px; background: #7a858c; }
```
